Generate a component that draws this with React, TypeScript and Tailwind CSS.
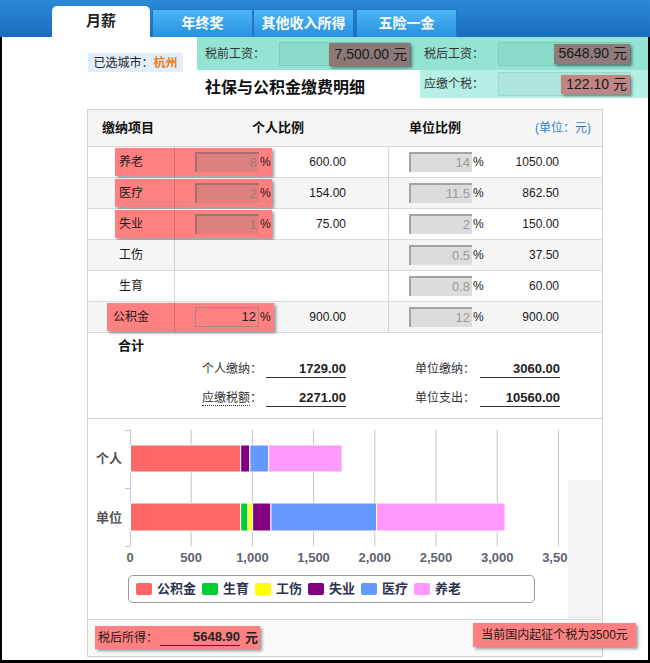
import React from "react";

type Row = {
  name: string;
  personal?: string;
  pAmt?: string;
  unit: string;
  uAmt: string;
  hl?: "std" | "wide";
  bg: string;
};

const ROWS: Row[] = [
  { name: "养老", personal: "8", pAmt: "600.00", unit: "14", uAmt: "1050.00", hl: "std", bg: "bg-white" },
  { name: "医疗", personal: "2", pAmt: "154.00", unit: "11.5", uAmt: "862.50", hl: "std", bg: "bg-[#f5f5f5]" },
  { name: "失业", personal: "1", pAmt: "75.00", unit: "2", uAmt: "150.00", hl: "std", bg: "bg-white" },
  { name: "工伤", unit: "0.5", uAmt: "37.50", bg: "bg-[#f5f5f5]" },
  { name: "生育", unit: "0.8", uAmt: "60.00", bg: "bg-white" },
  { name: "公积金", personal: "12", pAmt: "900.00", unit: "12", uAmt: "900.00", hl: "wide", bg: "bg-[#f5f5f5]" },
];

const COLORS = {
  gjj: "#ff6666",
  sy: "#00cc33",
  gs: "#ffff00",
  shiye: "#800080",
  yl: "#6699ff",
  ylao: "#ff99ff",
};

const PERSONAL_BAR = [
  { v: 900, c: COLORS.gjj },
  { v: 75, c: COLORS.shiye },
  { v: 154, c: COLORS.yl },
  { v: 600, c: COLORS.ylao },
];

const UNIT_BAR = [
  { v: 900, c: COLORS.gjj },
  { v: 60, c: COLORS.sy },
  { v: 37.5, c: COLORS.gs },
  { v: 150, c: COLORS.shiye },
  { v: 862.5, c: COLORS.yl },
  { v: 1050, c: COLORS.ylao },
];

const LEGEND = [
  { label: "公积金", c: COLORS.gjj },
  { label: "生育", c: COLORS.sy },
  { label: "工伤", c: COLORS.gs },
  { label: "失业", c: COLORS.shiye },
  { label: "医疗", c: COLORS.yl },
  { label: "养老", c: COLORS.ylao },
];

const X0 = 42;
const PX = 0.1224;
const TICKS = ["0", "500", "1,000", "1,500", "2,000", "2,500", "3,000", "3,500"];

function Bar({ data, y, h }: { data: { v: number; c: string }[]; y: number; h: number }) {
  let x = X0 + 0.5;
  return (
    <g>
      {data.map((d, i) => {
        const w = d.v * PX;
        const rect = <rect key={i} x={x} y={y} width={w} height={h} fill={d.c} stroke="#fff" strokeWidth={1} />;
        x += w;
        return rect;
      })}
    </g>
  );
}

function Chart() {
  return (
    <svg width={514} height={156} className="block">
      {TICKS.map((_, i) =>
        i === 0 ? null : (
          <line key={i} x1={X0 + i * 61.2} x2={X0 + i * 61.2} y1={11} y2={127} stroke="#c4c4c4" strokeWidth={1} />
        )
      )}
      <line x1={X0 + 0.5} x2={X0 + 0.5} y1={11} y2={127} stroke="#b8c8dc" strokeWidth={1} />
      {[11, 69, 127].map((y) => (
        <line key={y} x1={37} x2={X0} y1={y + 0.5} y2={y + 0.5} stroke="#b8c8dc" strokeWidth={1} />
      ))}
      <Bar data={PERSONAL_BAR} y={26} h={27} />
      <Bar data={UNIT_BAR} y={84} h={28} />
      <text x={34} y={44} textAnchor="end" fontSize={13} fontWeight="bold" fill="#555">个人</text>
      <text x={34} y={103} textAnchor="end" fontSize={13} fontWeight="bold" fill="#555">单位</text>
      {TICKS.map((t, i) => (
        <text key={t} x={X0 + i * 61.2} y={143} textAnchor="middle" fontSize={13} fontWeight="bold" fill="#626270">
          {t}
        </text>
      ))}
    </svg>
  );
}

export default function App() {
  return (
    <div className="h-[663px] w-[650px] overflow-hidden bg-black font-['Liberation_Sans','Noto_Sans_CJK_SC',sans-serif] text-[#222]">
      {/* tabs */}
      <div className="flex h-[37px] items-end bg-linear-to-b from-[#2c8ad8] to-[#196bbd] pl-[52px]">
        <div className="flex h-[31px] w-[98px] items-center justify-center rounded-t-[5px] bg-white text-[15px] font-bold text-[#222]">
          月薪
        </div>
        {["年终奖", "其他收入所得", "五险一金"].map((t, i) => (
          <div
            key={t}
            className={`flex h-[28px] w-[101px] items-center justify-center border border-b-0 border-[#2475c4] bg-linear-to-b from-[#4cb6f6] to-[#2790e0] text-[14px] font-bold text-white ${
              i === 1 ? "" : "ml-[2px]"
            }`}
          >
            {t}
          </div>
        ))}
      </div>

      <div className="mx-[2px] h-[623px] bg-white">
        {/* top summary */}
        <div className="flex h-[61px]">
          <div className="w-[195px] pt-[16px] pl-[86px]">
            <div className="flex h-[19px] w-[95px] items-center justify-center bg-[#e2eefa] text-[12px] text-[#222]">
              已选城市：<span className="font-bold text-[#f07a1a]">杭州</span>
            </div>
          </div>
          <div className="flex flex-1 flex-col">
            <div className="flex h-[33px] items-center bg-[#93e4d2] pl-[8px]">
              <span className="w-[74px] text-[12px] text-[#333]">税前工资：</span>
              <div className="flex h-[24px] w-[132px] justify-end border border-[#7bcdbc] bg-[#8adbca]">
                <div className="flex h-[23px] w-[81px] items-center justify-end bg-[#8d7878] pr-[3px] text-[14px] text-[#1a1a1a] shadow-[2px_2px_3px_rgba(0,0,0,0.45)]">
                  7,500.00 元
                </div>
              </div>
              <span className="ml-[13px] w-[74px] text-[12px] text-[#333]">税后工资：</span>
              <div className="flex h-[24px] w-[133px] items-center justify-end border border-[#7bcdbc] bg-[#8adbca]">
                <div className="flex h-[20px] w-[76px] items-center justify-end bg-[#8f7b7b] pr-[3px] text-[14px] text-[#1a1a1a] shadow-[2px_2px_3px_rgba(0,0,0,0.45)]">
                  5648.90 元
                </div>
              </div>
            </div>
            <div className="flex h-[28px]">
              <div className="flex w-[223px] items-end pl-[8px]">
                <span className="text-[16px] leading-[20px] font-bold text-[#111]">社保与公积金缴费明细</span>
              </div>
              <div className="flex flex-1 items-center bg-[#b6efe4] pl-[4px]">
                <span className="w-[74px] text-[12px] text-[#333]">应缴个税：</span>
                <div className="flex h-[24px] w-[133px] items-center justify-end border border-[#9dd8cd] bg-[#aee6dc]">
                  <div className="flex h-[19px] w-[69px] items-center justify-end bg-[#c08585] pr-[3px] text-[14px] text-[#1a1a1a] shadow-[2px_2px_3px_rgba(0,0,0,0.4)]">
                    122.10 元
                  </div>
                </div>
              </div>
            </div>
          </div>
        </div>

        {/* detail table */}
        <div className="mt-[11px] ml-[85px] w-[516px] border border-[#d2d2d2]">
          <div className="flex h-[37px] items-center border-b border-[#d6d6d6] bg-[#f5f5f5] text-[13px] font-bold text-[#111]">
            <span className="w-[87px] pl-[14px]">缴纳项目</span>
            <span className="w-[214px] pl-[77px]">个人比例</span>
            <span className="pl-[20px]">单位比例</span>
            <span className="mr-[11px] ml-auto text-[12px] font-normal text-[#2f7fd0]">(单位：元)</span>
          </div>

          {ROWS.map((r) => (
            <div key={r.name} className={`relative flex h-[31px] border-b border-[#dadada] ${r.bg}`}>
              {r.hl && (
                <div
                  className={`absolute top-px h-[28px] bg-[#ff8080] shadow-[2px_2px_3px_rgba(0,0,0,0.4)] ${
                    r.hl === "wide" ? "left-[19px] w-[167px]" : "left-[27px] w-[157px]"
                  }`}
                />
              )}
              <div className="relative flex w-[87px] items-center justify-center border-r border-black/15 text-[12px] text-[#1a1a1a]">
                {r.name}
              </div>
              <div className="relative flex w-[214px] items-center border-r border-black/15 pl-[20px]">
                {r.personal && (
                  <>
                    <div
                      className={`flex h-[20px] w-[64px] items-center justify-end pr-[2px] text-[13px] ${
                        r.hl === "wide"
                          ? "border border-[#a08888] text-[#222]"
                          : "border-t-2 border-l-2 border-[#a86e6e] bg-[#dd8080] text-[#b07474]"
                      }`}
                    >
                      {r.personal}
                    </div>
                    <span className="ml-px text-[12px] text-[#1a1a1a]">%</span>
                    <span className="ml-auto pr-[42px] text-[12px] text-[#1a1a1a]">{r.pAmt}</span>
                  </>
                )}
              </div>
              <div className="relative flex flex-1 items-center pl-[20px]">
                <div className="flex h-[20px] w-[63px] items-center justify-end border-t-2 border-l-2 border-[#a3a3a3] bg-[#dcdcdc] pr-[2px] text-[13px] text-[#9a9a9a]">
                  {r.unit}
                </div>
                <span className="ml-px text-[12px] text-[#1a1a1a]">%</span>
                <span className="ml-auto pr-[43px] text-[12px] text-[#1a1a1a]">{r.uAmt}</span>
              </div>
            </div>
          ))}

          {/* totals */}
          <div className="h-[86px] border-b border-[#d6d6d6] pt-[6px]">
            <div className="pl-[30px] text-[13px] leading-[14px] font-bold text-[#111]">合计</div>
            <div className="mt-[7px] flex h-[18px] items-end pl-[94px] text-[12px]">
              <span className="w-[80px] text-right text-[#333]">个人缴纳：</span>
              <span className="ml-[4px] w-[80px] border-b border-[#333] text-right text-[13px] leading-[17px] font-bold">1729.00</span>
              <span className="ml-[49px] w-[80px] text-right text-[#333]">单位缴纳：</span>
              <span className="ml-[5px] w-[80px] border-b border-[#333] text-right text-[13px] leading-[17px] font-bold">3060.00</span>
            </div>
            <div className="mt-[11px] flex h-[18px] items-end pl-[94px] text-[12px]">
              <span className="w-[80px] text-right text-[#333]">
                <span className="border-b border-dotted border-[#333]">应缴税额</span>：
              </span>
              <span className="ml-[4px] w-[80px] border-b border-[#333] text-right text-[13px] leading-[17px] font-bold">2271.00</span>
              <span className="ml-[49px] w-[80px] text-right text-[#333]">单位支出：</span>
              <span className="ml-[5px] w-[80px] border-b border-[#333] text-right text-[13px] leading-[17px] font-bold">10560.00</span>
            </div>
          </div>

          {/* chart */}
          <div className="relative h-[201px] border-b border-[#d6d6d6]">
            <Chart />
            <div className="ml-[40px] flex h-[28px] w-[407px] items-center gap-[6px] rounded-[5px] border border-[#999] pl-[7px]">
              {LEGEND.map((l) => (
                <div key={l.label} className="flex items-center">
                  <span className="h-[12px] w-[16px] rounded-[2px]" style={{ backgroundColor: l.c }} />
                  <span className="ml-[5px] text-[13px] font-bold text-[#2e3350]">{l.label}</span>
                </div>
              ))}
            </div>
            <div className="absolute top-[61px] right-0 bottom-0 w-[34px] bg-[#f4f4f4]" />
          </div>

          {/* footer */}
          <div className="relative h-[36px] bg-[#fafafa] pt-[6px]">
            <div className="ml-[7px] flex h-[23px] w-[165px] items-center bg-[#ff8080] pl-[3px] text-[12px] shadow-[2px_2px_3px_rgba(0,0,0,0.4)]">
              <span className="w-[62px] text-[#1a1a1a]">税后所得：</span>
              <span className="w-[80px] border-b border-[#333] text-right text-[13px] leading-[16px] font-bold">5648.90</span>
              <span className="ml-[5px] text-[13px] font-bold">元</span>
            </div>
            <div className="absolute top-[3px] left-[385px] flex h-[24px] w-[163px] items-center justify-center bg-[#ff8080] text-[12px] text-[#1a1a1a] shadow-[2px_2px_3px_rgba(0,0,0,0.4)]">
              当前国内起征个税为3500元
            </div>
          </div>
        </div>
      </div>
    </div>
  );
}
